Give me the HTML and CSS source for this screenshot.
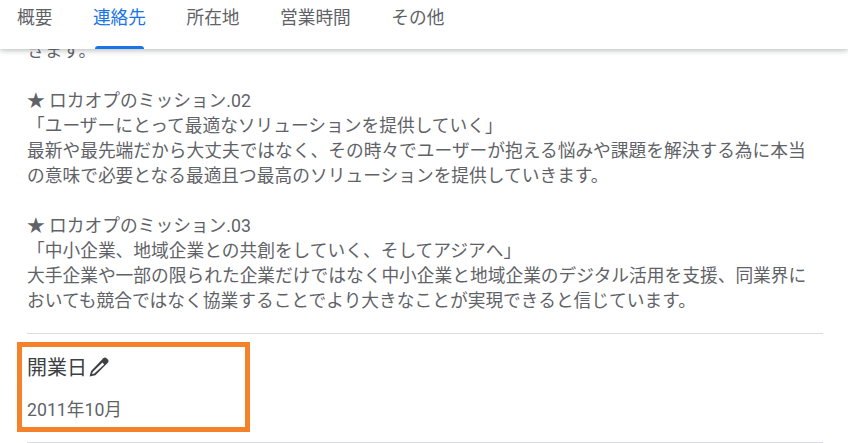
FILE: index.html
```html
<!DOCTYPE html>
<html lang="ja">
<head>
    <meta charset="UTF-8">
    <title>連絡先</title>
    <link rel="stylesheet" href="styles.css">
</head>
<body>
    <nav class="tabs">
        <a class="tab">概要</a>
        <a class="tab active">連絡先</a>
        <a class="tab">所在地</a>
        <a class="tab">営業時間</a>
        <a class="tab">その他</a>
    </nav>
    <main class="content">
        <section class="description">
            <p>きます。</p>
            <p>&nbsp;</p>
            <p>★ ロカオプのミッション.02</p>
            <p>「ユーザーにとって最適なソリューションを提供していく」</p>
            <p>最新や最先端だから大丈夫ではなく、その時々でユーザーが抱える悩みや課題を解決する為に本当の意味で必要となる最適且つ最高のソリューションを提供していきます。</p>
            <p>&nbsp;</p>
            <p>★ ロカオプのミッション.03</p>
            <p>「中小企業、地域企業との共創をしていく、そしてアジアへ」</p>
            <p>大手企業や一部の限られた企業だけではなく中小企業と地域企業のデジタル活用を支援、同業界においても競合ではなく協業することでより大きなことが実現できると信じています。</p>
        </section>
        <section class="field">
            <h2 class="field-title">開業日
                <svg class="edit-icon" viewBox="0 0 20 20" width="20" height="20">
                    <path d="M14.300 1.200a2.300 2.300 0 0 1 3.200 0l1.300 1.300a2.300 2.300 0 0 1 0 3.200L6.400 18.200 0.600 19.600l1.500-5.700z" fill="#3c4043"/>
                    <path d="M13.400 5.600l1.800 1.800-9.900 9.200-2.300.7.700-2.300z" fill="#fff"/>
                </svg>
            </h2>
            <p class="field-value">2011年10月</p>
        </section>
    </main>
</body>
</html>
```
FILE: styles.css
```css
*, *::after {
    box-sizing: border-box;
}
html, body {
    margin: 0;
    padding: 0;
}
body {
    height: 443px;
    overflow: hidden;
    background-color: #fff;
    font-family: Roboto, "Noto Sans CJK JP", sans-serif;
    color: #5f6368;
}
p {
    margin: 0;
}
.tabs {
    position: relative;
    z-index: 2;
    display: flex;
    gap: 40.5px;
    height: 49px;
    padding-left: 17px;
    background-color: #fff;
    box-shadow: 0 1px 6px rgba(60, 64, 67, 0.4);
}
.tab {
    position: relative;
    font-size: 17.7px;
    line-height: 36px;
    color: #5f6368;
}
.tab.active {
    color: #1a73e8;
}
.tab.active::after {
    content: "";
    position: absolute;
    left: 2px;
    right: 2px;
    bottom: 0;
    height: 3px;
    background-color: #1a73e8;
    border-radius: 3px 3px 0 0;
}
.content {
    margin: -10px 25px 0 27px;
}
.description {
    font-size: 17.73px;
    line-height: 25px;
    padding: 0 12px 19px 0;
    border-bottom: 1px solid #dadce0;
}
.field {
    position: relative;
    height: 109px;
    padding-top: 20px;
    border-bottom: 1px solid #dadce0;
}
.field::after {
    content: "";
    position: absolute;
    left: -10px;
    top: 8px;
    width: 233px;
    height: 90px;
    border: 5px solid #f5822a;
}
.field-title {
    display: flex;
    align-items: center;
    gap: 2px;
    margin: 0 0 16px;
    font-size: 20px;
    font-weight: 400;
    line-height: 28px;
    color: #3c4043;
}
.edit-icon {
    margin-bottom: 3px;
}
.field-value {
    font-size: 17.7px;
    line-height: 24px;
}
```
